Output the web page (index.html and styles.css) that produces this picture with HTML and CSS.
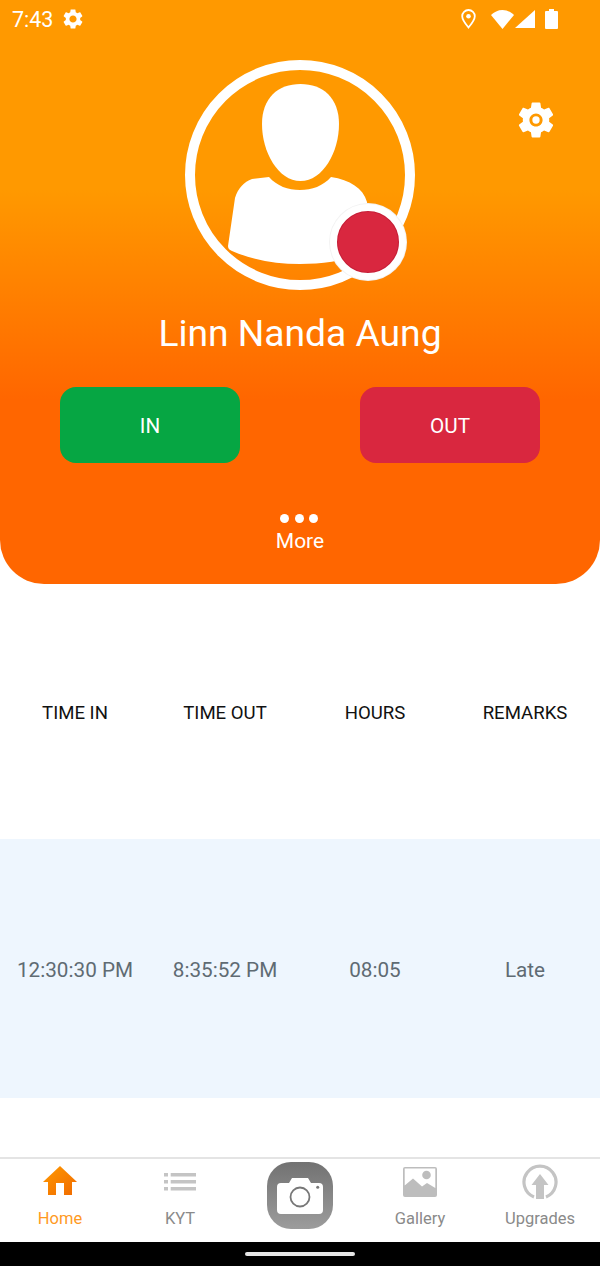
FILE: index.html
```html
<!DOCTYPE html>
<html lang="en">
<head>
<meta charset="utf-8">
<title>Attendance</title>
<link rel="stylesheet" href="styles.css">
</head>
<body>
<div class="app">
  <section class="hero">
    <div class="status">
      <div class="status-left">
        <span class="clock">7:43</span>
        <svg class="st-gear" viewBox="0 0 24 24"><path fill="#fff" d="M19.14 12.94c.04-.3.06-.61.06-.94 0-.32-.02-.64-.07-.94l2.03-1.58c.18-.14.23-.41.12-.61l-1.92-3.32c-.12-.22-.37-.29-.59-.22l-2.39.96c-.5-.38-1.03-.7-1.62-.94l-.36-2.54c-.04-.24-.24-.41-.48-.41h-3.84c-.24 0-.43.17-.47.41l-.36 2.54c-.59.24-1.13.57-1.62.94l-2.39-.96c-.22-.08-.47 0-.59.22L2.74 8.87c-.12.21-.08.47.12.61l2.03 1.58c-.05.3-.09.63-.09.94s.02.64.07.94l-2.03 1.58c-.18.14-.23.41-.12.61l1.92 3.32c.12.22.37.29.59.22l2.39-.96c.5.38 1.03.7 1.62.94l.36 2.54c.05.24.24.41.48.41h3.84c.24 0 .44-.17.47-.41l.36-2.54c.59-.24 1.13-.56 1.62-.94l2.39.96c.22.08.47 0 .59-.22l1.92-3.32c.12-.22.07-.47-.12-.61l-2.01-1.58zM12 15.6c-1.98 0-3.6-1.62-3.6-3.6s1.62-3.6 3.6-3.6 3.6 1.62 3.6 3.6-1.62 3.6-3.6 3.6z"/></svg>
      </div>
      <div class="status-right">
        <svg class="st-pin" viewBox="0 0 15 20"><path fill="none" stroke="#fff" stroke-width="1.8" d="M7.5 1C4 1 1.200 3.700 1.200 7.200c0 3.600 3.800 8.300 6.300 11.300 2.500-3 6.300-7.700 6.300-11.300C13.800 3.700 11 1 7.500 1z"/><circle cx="7.500" cy="7.200" r="2.300" fill="#fff"/></svg>
        <svg class="st-wifi" viewBox="0 0 23 19"><path fill="#fff" d="M11.500 19 0 5C3 2 7 0 11.500 0S20 2 23 5z"/></svg>
        <svg class="st-signal" viewBox="0 0 20 18"><path fill="#fff" d="M20 0v18H0z"/></svg>
        <svg class="st-batt" viewBox="0 0 13 20"><path fill="#fff" d="M4 0h5v2h3a1 1 0 0 1 1 1v16a1 1 0 0 1-1 1H1a1 1 0 0 1-1-1V3a1 1 0 0 1 1-1h3z"/></svg>
      </div>
    </div>
    <div class="avatar-wrap">
      <svg class="avatar" viewBox="0 0 230 230">
        <circle cx="115" cy="115" r="110" fill="none" stroke="#fff" stroke-width="10"/>
        <path fill="#fff" d="M115.500 24C138 24 154 38 154 64c0 28-16 57-38.500 57S77 92 77 64c0-26 16-40 38.500-40z"/>
        <path fill="#fff" d="M84 117c8 9 19 13 31 13s23-4 31-13c19 3 32 11 36 25l5 48c-22 10-47 14-72 14-25 0-47-4-68-13-3-1-4-3-4-5l7-48c3-10 9-16 17-19z"/>
      </svg>
      <span class="rec-badge"></span>
    </div>
    <svg class="settings" viewBox="0 0 24 24"><path fill="#fff" d="M19.14 12.94c.04-.3.06-.61.06-.94 0-.32-.02-.64-.07-.94l2.03-1.58c.18-.14.23-.41.12-.61l-1.92-3.32c-.12-.22-.37-.29-.59-.22l-2.39.96c-.5-.38-1.03-.7-1.62-.94l-.36-2.54c-.04-.24-.24-.41-.48-.41h-3.84c-.24 0-.43.17-.47.41l-.36 2.54c-.59.24-1.13.57-1.62.94l-2.39-.96c-.22-.08-.47 0-.59.22L2.74 8.87c-.12.21-.08.47.12.61l2.03 1.58c-.05.3-.09.63-.09.94s.02.64.07.94l-2.03 1.58c-.18.14-.23.41-.12.61l1.92 3.32c.12.22.37.29.59.22l2.39-.96c.5.38 1.03.7 1.62.94l.36 2.54c.05.24.24.41.48.41h3.84c.24 0 .44-.17.47-.41l.36-2.54c.59-.24 1.13-.56 1.62-.94l2.39.96c.22.08.47 0 .59-.22l1.92-3.32c.12-.22.07-.47-.12-.61l-2.01-1.58zM12 15.6c-1.98 0-3.6-1.62-3.6-3.6s1.62-3.6 3.6-3.6 3.6 1.62 3.6 3.6-1.62 3.6-3.6 3.6z"/><circle cx="12" cy="12" r="2" fill="#fff"/></svg>
    <h1 class="name">Linn Nanda Aung</h1>
    <div class="actions">
      <div class="action"><button class="btn btn-in">IN</button></div>
      <div class="action"><button class="btn btn-out">OUT</button></div>
    </div>
    <div class="more">
      <div class="dots"><i></i><i></i><i></i></div>
      <span class="more-label">More</span>
    </div>
  </section>
  <main class="table">
    <div class="row row-head"><span>TIME IN</span><span>TIME OUT</span><span>HOURS</span><span>REMARKS</span></div>
    <div class="row row-data"><span>12:30:30 PM</span><span>8:35:52 PM</span><span>08:05</span><span>Late</span></div>
  </main>
  <nav class="nav">
    <div class="tab tab-active">
      <svg class="tab-icon" viewBox="0 0 36 36"><defs><linearGradient id="homeG" x1="0" y1="0" x2="1" y2="1"><stop offset="0" stop-color="#ff9900"/><stop offset="1" stop-color="#f06a00"/></linearGradient></defs><path fill="url(#homeG)" d="M18 2 35 18h-5v13H22V19h-8v12H6V18H1z"/></svg>
      <span>Home</span>
    </div>
    <div class="tab">
      <svg class="tab-icon" viewBox="0 0 36 36"><path fill="#c4c4c4" d="M2 9h4v3.500H2zM8.700 9H34v3.500H8.700zM2 16h4v3.500H2zM8.700 16H34v3.500H8.700zM2 23h4v3.500H2zM8.700 23H34v3.500H8.700z"/></svg>
      <span>KYT</span>
    </div>
    <div class="tab tab-cam">
      <div class="cam">
        <svg viewBox="0 0 46 36" class="cam-icon"><path fill="#fff" d="M4 5h8l3-5h16l3 5h8a4 4 0 0 1 4 4v23a4 4 0 0 1-4 4H4a4 4 0 0 1-4-4V9a4 4 0 0 1 4-4z"/><circle cx="23" cy="19" r="9.500" fill="none" stroke="#777" stroke-width="1.800"/><circle cx="40.700" cy="9.300" r="1.500" fill="#777"/></svg>
      </div>
    </div>
    <div class="tab">
      <svg class="tab-icon" viewBox="0 0 36 36"><path fill="#bdbdbd" fill-rule="evenodd" d="M3 3h30a2 2 0 0 1 2 2v26a2 2 0 0 1-2 2H3a2 2 0 0 1-2-2V5a2 2 0 0 1 2-2zm-.3 1.500v17l8.300-7 9 8 5-3.500 8.300 5V4.500z"/><circle cx="24.500" cy="11" r="4.300" fill="#bdbdbd"/></svg>
      <span>Gallery</span>
    </div>
    <div class="tab">
      <svg class="tab-icon" viewBox="0 0 36 36"><path fill="none" stroke="#c4c4c4" stroke-width="3.200" d="M12 33A16 16 0 1 1 24 33"/><path fill="#c4c4c4" d="M18 10l8.500 11H22v14h-8V21H9.500z"/></svg>
      <span>Upgrades</span>
    </div>
  </nav>
  <div class="gesture"><i></i></div>
</div>
</body>
</html>
```
FILE: styles.css
```css
* { box-sizing: border-box; }
html, body { margin: 0; padding: 0; }
body { font-family: Roboto, "Liberation Sans", sans-serif; background: #fff; }
.app { width: 600px; height: 1266px; display: flex; flex-direction: column; overflow: hidden; }

.hero {
  position: relative;
  height: 584px;
  flex: none;
  color: #fff;
  background: linear-gradient(180deg, #ff9900 0, #ff9900 190px, #ff6600 400px, #ff6600 100%);
  border-radius: 0 0 44px 44px;
  display: flex;
  flex-direction: column;
  align-items: center;
}
.status { width: 100%; height: 38px; padding: 0 42px 0 12px; display: flex; justify-content: space-between; align-items: center; }
.status-left, .status-right { display: flex; align-items: center; }
.clock { font-size: 21.500px; line-height: 38px; padding-top: 1px; }
.st-gear { width: 24px; height: 24px; margin-left: 8px; }
.st-pin { width: 15px; height: 20px; }
.st-wifi { width: 23px; height: 19px; margin-left: 15px; }
.st-signal { width: 20px; height: 18px; margin-left: 1px; }
.st-batt { width: 13px; height: 20px; margin-left: 10px; }

.avatar-wrap { position: relative; width: 230px; height: 230px; margin-top: 22px; }
.avatar { display: block; width: 230px; height: 230px; }
.rec-badge {
  position: absolute;
  left: 145px;
  top: 144px;
  width: 76px;
  height: 76px;
  border-radius: 50%;
  background: #d9273f;
  border: 7.500px solid #fff;
  box-shadow: inset 0 0 0 1px #c41f38, 0 0 0 1px #f3f3f3;
}
.settings { position: absolute; left: 514px; top: 98px; width: 44px; height: 44px; }
.name { margin: 20px 0 0; font-size: 37.200px; line-height: 46px; font-weight: 400; }
.actions { width: 100%; display: grid; grid-template-columns: 1fr 1fr; margin-top: 31px; }
.action { display: flex; justify-content: center; }
.btn { width: 180px; height: 76px; border: 0; border-radius: 16px; color: #fff; font: 400 20.700px Roboto, sans-serif; padding: 2px 0 0; }
.btn-in { background: #06a643; }
.btn-out { background: #d9273f; }
.more { display: flex; flex-direction: column; align-items: center; margin-top: 51px; }
.dots { display: flex; gap: 5.500px; margin-right: 2px; }
.dots i { width: 9px; height: 9px; border-radius: 50%; background: #fff; display: block; }
.more-label { font-size: 21px; line-height: 24px; margin-top: 6px; }

.table { flex: 1; }
.row { display: grid; grid-template-columns: repeat(4, 150px); align-items: center; text-align: center; }
.row-head { height: 255px; font-size: 18.600px; line-height: 24px; padding-top: 2px; color: #111; }
.row-data { height: 259px; font-size: 20.700px; line-height: 24px; padding-top: 2px; color: #5f6b73; background: #eef6fe; }

.nav { height: 85px; flex: none; border-top: 2px solid #e4e4e4; display: grid; grid-template-columns: repeat(5, 120px); background: #fff; }
.tab { display: flex; flex-direction: column; align-items: center; color: #8a8a8a; font-size: 16.500px; padding-top: 5px; }
.tab span { margin-top: auto; margin-bottom: 14px; line-height: 19px; }
.tab-icon { width: 36px; height: 36px; display: block; }
.tab-active { color: #ff9a1f; }
.tab-cam { padding-top: 3px; }
.cam { width: 66px; height: 67px; border-radius: 24px; background: linear-gradient(180deg, #727272, #9c9c9c); display: flex; align-items: center; justify-content: center; }
.cam-icon { width: 46px; height: 36px; }
.gesture { height: 24px; flex: none; background: #000; display: flex; align-items: center; justify-content: center; }
.gesture i { display: block; width: 110px; height: 4px; border-radius: 2px; background: #e6e6e6; }
```
